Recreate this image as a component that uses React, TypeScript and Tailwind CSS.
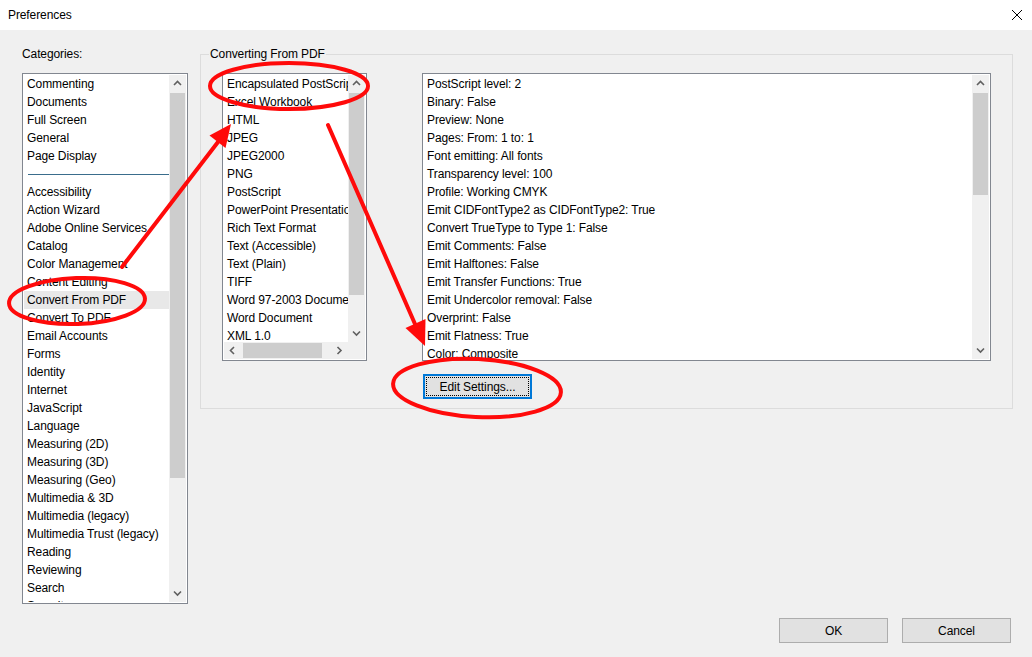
import React from "react";

const categories = [
  "Commenting",
  "Documents",
  "Full Screen",
  "General",
  "Page Display",
  "---",
  "Accessibility",
  "Action Wizard",
  "Adobe Online Services",
  "Catalog",
  "Color Management",
  "Content Editing",
  "Convert From PDF",
  "Convert To PDF",
  "Email Accounts",
  "Forms",
  "Identity",
  "Internet",
  "JavaScript",
  "Language",
  "Measuring (2D)",
  "Measuring (3D)",
  "Measuring (Geo)",
  "Multimedia & 3D",
  "Multimedia (legacy)",
  "Multimedia Trust (legacy)",
  "Reading",
  "Reviewing",
  "Search",
  "Security",
];

const formats = [
  "Encapsulated PostScript",
  "Excel Workbook",
  "HTML",
  "JPEG",
  "JPEG2000",
  "PNG",
  "PostScript",
  "PowerPoint Presentation",
  "Rich Text Format",
  "Text (Accessible)",
  "Text (Plain)",
  "TIFF",
  "Word 97-2003 Document",
  "Word Document",
  "XML 1.0",
];

const settings = [
  "PostScript level: 2",
  "Binary: False",
  "Preview: None",
  "Pages: From: 1 to: 1",
  "Font emitting: All fonts",
  "Transparency level: 100",
  "Profile: Working CMYK",
  "Emit CIDFontType2 as CIDFontType2: True",
  "Convert TrueType to Type 1: False",
  "Emit Comments: False",
  "Emit Halftones: False",
  "Emit Transfer Functions: True",
  "Emit Undercolor removal: False",
  "Overprint: False",
  "Emit Flatness: True",
  "Color: Composite",
];

function Chevron({ dir }: { dir: "up" | "down" | "left" | "right" }) {
  const d = {
    up: "M1 5 L4.5 1.5 L8 5",
    down: "M1 1.5 L4.5 5 L8 1.5",
    left: "M5 1 L1.5 4.5 L5 8",
    right: "M1.5 1 L5 4.5 L1.5 8",
  }[dir];
  const vertical = dir === "up" || dir === "down";
  return (
    <svg width={vertical ? 9 : 7} height={vertical ? 7 : 9} viewBox={vertical ? "0 0 9 7" : "0 0 7 9"}>
      <path d={d} fill="none" stroke="#606060" strokeWidth="1.6" />
    </svg>
  );
}

function VScroll({ thumb }: { thumb: number }) {
  return (
    <div className="w-[17px] flex flex-col bg-[#f0f0f0] shrink-0">
      <div className="h-[17px] flex items-center justify-center">
        <Chevron dir="up" />
      </div>
      <div className="flex-1 px-[1px]">
        <div className="mt-[1px] bg-[#cdcdcd]" style={{ height: thumb }} />
      </div>
      <div className="h-[17px] flex items-center justify-center">
        <Chevron dir="down" />
      </div>
    </div>
  );
}

function Row({ text, selected }: { text: string; selected?: boolean }) {
  return (
    <div
      className={`h-[18px] pt-[1px] leading-[17px] pl-[3px] whitespace-nowrap ${selected ? "bg-[#e8e8e8]" : ""}`}
    >
      {text}
    </div>
  );
}

function WinButton({ label }: { label: string }) {
  return (
    <button className="w-[109px] h-[25px] bg-[#e1e1e1] border border-[#adadad] text-black">
      {label}
    </button>
  );
}

function Annotations() {
  return (
    <svg className="absolute inset-0 pointer-events-none" width="1032" height="657" viewBox="0 0 1032 657">
      <g fill="none" stroke="#ff0a0a" strokeWidth="4" strokeLinecap="round">
        <ellipse cx="77" cy="301" rx="68" ry="23" transform="rotate(-2 77 301)" />
        <ellipse cx="289" cy="86" rx="79" ry="23" />
        <ellipse cx="477" cy="388" rx="84" ry="29" transform="rotate(3 477 388)" />
        <line x1="122" y1="267" x2="218" y2="142" />
        <line x1="328" y1="125" x2="415" y2="324" />
      </g>
      <g fill="#ff0a0a">
        <polygon points="231,124 225.5,148 209.5,135.5" />
        <polygon points="425,346 425.5,319 405.5,328" />
      </g>
    </svg>
  );
}

export default function App() {
  return (
    <div
      className="relative w-[1032px] h-[657px] bg-[#f0f0f0] text-[12px] text-black overflow-hidden tracking-[-0.1px]"
      style={{ fontFamily: '"Segoe UI", "Liberation Sans", Arial, sans-serif' }}
    >
      {/* title bar */}
      <div className="h-[30px] bg-white flex items-center justify-between pl-[8px] pr-[8px]">
        <span>Preferences</span>
        <svg width="12" height="12" viewBox="0 0 12 12" className="mr-[1px] mb-[1px]">
          <path d="M1 1 L11 11 M11 1 L1 11" stroke="#000" strokeWidth="1" />
        </svg>
      </div>

      <div className="pt-[15px]">
        <div className="flex items-start">
          {/* categories */}
          <div className="ml-[22px] w-[166px]">
            <div className="h-[18px] pt-[1px] leading-[17px]">Categories:</div>
            <div className="mt-[10px] h-[531px] border border-[#828790] bg-white p-[1px] flex">
              <div className="flex-1 overflow-hidden">
                {categories.map((c, i) =>
                  c === "---" ? (
                    <div key={i} className="h-[18px] flex items-center pl-[4px]">
                      <div className="h-px w-full bg-[#3a6d8c]" />
                    </div>
                  ) : (
                    <Row key={i} text={c} selected={c === "Convert From PDF"} />
                  )
                )}
              </div>
              <VScroll thumb={385} />
            </div>
          </div>

          {/* group box */}
          <fieldset className="ml-[12px] w-[813px] border border-[#dcdcdc]">
            <legend className="ml-[8px] px-[1px] h-[18px] leading-[18px]">Converting From PDF</legend>
            <div className="flex items-start pt-[10px] pl-[21px] pr-[21px] pb-[9px]">
              {/* formats list */}
              <div className="w-[145px] h-[288px] border border-[#828790] bg-white p-[1px] flex flex-col">
                <div className="flex flex-1 min-h-0">
                  <div className="flex-1 overflow-hidden">
                    {formats.map((f) => (
                      <Row key={f} text={f} />
                    ))}
                  </div>
                  <VScroll thumb={202} />
                </div>
                <div className="h-[17px] flex bg-[#f0f0f0]">
                  <div className="w-[17px] flex items-center justify-center">
                    <Chevron dir="left" />
                  </div>
                  <div className="flex-1 py-[1px]">
                    <div className="ml-[2px] w-[79px] h-full bg-[#cdcdcd]" />
                  </div>
                  <div className="w-[17px] flex items-center justify-center">
                    <Chevron dir="right" />
                  </div>
                  <div className="w-[17px]" />
                </div>
              </div>

              {/* settings */}
              <div className="ml-[55px] w-[569px]">
                <div className="h-[288px] border border-[#828790] bg-white p-[1px] flex">
                  <div className="flex-1 overflow-hidden">
                    {settings.map((s) => (
                      <Row key={s} text={s} />
                    ))}
                  </div>
                  <VScroll thumb={102} />
                </div>
                <button className="mt-[13px] ml-[1px] w-[109px] h-[25px] bg-[#e1e1e1] border-2 border-[#0078d7] p-[1px] flex">
                  <span className="flex-1 flex items-center justify-center border border-dotted border-black">
                    Edit Settings...
                  </span>
                </button>
              </div>
            </div>
          </fieldset>
        </div>

        <div className="mt-[14px] flex justify-end gap-[14px] pr-[21px]">
          <WinButton label="OK" />
          <WinButton label="Cancel" />
        </div>
      </div>

      <Annotations />
    </div>
  );
}
